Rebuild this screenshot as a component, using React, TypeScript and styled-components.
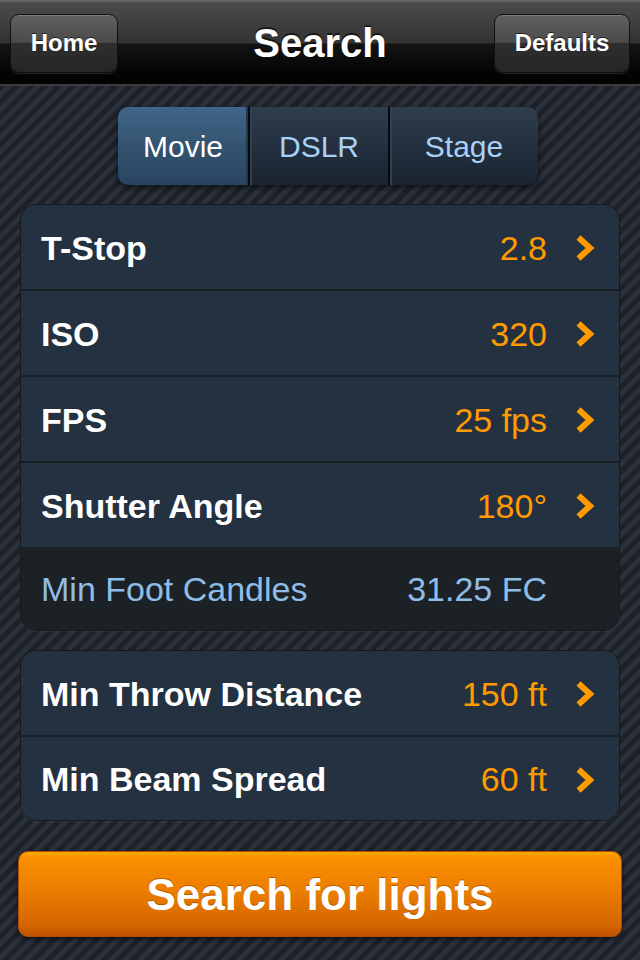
import React from "react";
import styled, { createGlobalStyle } from "styled-components";

const GlobalStyle = createGlobalStyle`
  html, body {
    margin: 0;
    padding: 0;
  }
  body {
    width: 640px;
    height: 960px;
    overflow: hidden;
    font-family: "Liberation Sans", Arial, Helvetica, sans-serif;
    background-color: #20262e;
    background-image: repeating-linear-gradient(
      135deg,
      #1d2229 0px,
      #1d2229 5px,
      #2a313b 5px,
      #2a313b 10px
    );
  }
`;

const Screen = styled.div`
  width: 640px;
  height: 960px;
  display: flex;
  flex-direction: column;
`;

const NavBar = styled.header`
  height: 86px;
  display: grid;
  grid-template-columns: 1fr auto 1fr;
  align-items: center;
  padding: 0 10px;
  box-sizing: border-box;
  background: linear-gradient(
    to bottom,
    #6e6e6e 0px,
    #4a4a4a 3px,
    #333333 43px,
    #141414 44px,
    #050505 70px,
    #000000 86px
  );
  border-bottom: 2px solid #3c3c3c;
`;

const NavButton = styled.button<{ $side: "left" | "right" }>`
  justify-self: ${(p) => (p.$side === "left" ? "start" : "end")};
  width: ${(p) => (p.$side === "left" ? "108px" : "136px")};
  height: 59px;
  margin-top: 2px;
  border-radius: 9px;
  border: 1px solid #101010;
  background: linear-gradient(
    to bottom,
    #606060 0%,
    #4a4a4a 48%,
    #2e2e2e 50%,
    #262626 100%
  );
  box-shadow: inset 0 1px 0 rgba(255, 255, 255, 0.18), 0 1px 0 rgba(255, 255, 255, 0.12);
  color: #ffffff;
  font-family: "Liberation Sans", Arial, sans-serif;
  font-weight: bold;
  font-size: 24px;
  text-shadow: 0 -1px 0 rgba(0, 0, 0, 0.6);
  padding: 0;
`;

const Title = styled.h1`
  margin: 2px 0 0 0;
  color: #ffffff;
  font-size: 40px;
  font-weight: bold;
  text-shadow: 0 -2px 0 rgba(0, 0, 0, 0.6);
`;

const Content = styled.main`
  display: flex;
  flex-direction: column;
  padding: 0 20px;
`;

const Segmented = styled.div`
  align-self: flex-start;
  margin: 21px 0 0 98px;
  display: grid;
  grid-template-columns: 130px 138px 148px;
  column-gap: 2px;
  height: 78px;
  border-radius: 10px;
  overflow: hidden;
  background: #06090c;
  box-shadow: 0 3px 6px rgba(0, 0, 0, 0.55);
`;

const Segment = styled.div<{ $active?: boolean }>`
  display: flex;
  align-items: center;
  justify-content: center;
  padding-top: 2px;
  font-size: 30px;
  color: ${(p) => (p.$active ? "#ffffff" : "#a9d1f7")};
  background: ${(p) =>
    p.$active
      ? "linear-gradient(to bottom, #41658a 0%, #33536f 50%, #294460 100%)"
      : "linear-gradient(to bottom, #2f3d4c 0%, #243040 50%, #1a2430 100%)"};
  box-shadow: ${(p) =>
    p.$active ? "inset -2px 0 0 #1e3852" : "inset 2px 0 0 #33414f"};
`;

const Group = styled.section<{ $top: number }>`
  margin-top: ${(p) => p.$top}px;
  border: 1px solid #15191d;
  border-radius: 16px;
  overflow: hidden;
  background: #243140;
  box-shadow: 0 1px 0 rgba(255, 255, 255, 0.04);
`;

const Row = styled.div<{ $divider?: boolean; $muted?: boolean; $h?: number }>`
  height: ${(p) => p.$h ?? 84}px;
  display: flex;
  align-items: center;
  padding: 2px 24px 0 20px;
  box-sizing: border-box;
  border-top: ${(p) => (p.$divider ? "2px solid #1a1f25" : "none")};
  background: ${(p) => (p.$muted ? "#1c2126" : "#243140")};
`;

const Label = styled.span<{ $muted?: boolean }>`
  flex: 1;
  font-size: 34px;
  font-weight: ${(p) => (p.$muted ? "normal" : "bold")};
  color: ${(p) => (p.$muted ? "#8fbde8" : "#ffffff")};
`;

const Value = styled.span<{ $muted?: boolean }>`
  font-size: 34px;
  color: ${(p) => (p.$muted ? "#8fbde8" : "#ff9a00")};
`;

const ChevronSlot = styled.span`
  width: 48px;
  height: 28px;
  display: flex;
  justify-content: flex-end;
  align-items: center;
`;

const SearchButton = styled.button`
  margin: 30px -2px 0 -2px;
  height: 86px;
  border-radius: 10px;
  border: 1px solid #b24e00;
  background: linear-gradient(
    to bottom,
    #ffa800 0%,
    #fb8e00 8%,
    #ec7e00 45%,
    #d66700 85%,
    #c05400 100%
  );
  box-shadow: 0 2px 5px rgba(0, 0, 0, 0.6);
  color: #ffffff;
  font-family: "Liberation Sans", Arial, sans-serif;
  font-weight: bold;
  font-size: 44px;
  text-shadow: 0 -1px 0 rgba(120, 50, 0, 0.5);
  padding: 2px 0 0 0;
`;

const Chevron = () => (
  <svg width="20" height="28" viewBox="0 0 20 28">
    <polyline
      points="3.5,3.5 15,14 3.5,24.5"
      fill="none"
      stroke="#ff9a00"
      strokeWidth="6"
      strokeLinecap="butt"
      strokeLinejoin="miter"
    />
  </svg>
);

type Item = { label: string; value: string };

const cameraItems: Item[] = [
  { label: "T-Stop", value: "2.8" },
  { label: "ISO", value: "320" },
  { label: "FPS", value: "25 fps" },
  { label: "Shutter Angle", value: "180°" },
];

const lightItems: Item[] = [
  { label: "Min Throw Distance", value: "150 ft" },
  { label: "Min Beam Spread", value: "60 ft" },
];

export default function App() {
  return (
    <>
      <GlobalStyle />
      <Screen>
        <NavBar>
          <NavButton $side="left">Home</NavButton>
          <Title>Search</Title>
          <NavButton $side="right">Defaults</NavButton>
        </NavBar>
        <Content>
          <Segmented>
            <Segment $active>Movie</Segment>
            <Segment>DSLR</Segment>
            <Segment>Stage</Segment>
          </Segmented>

          <Group $top={19}>
            {cameraItems.map((it, i) => (
              <Row key={it.label} $divider={i > 0} $h={i > 0 ? 86 : 84}>
                <Label>{it.label}</Label>
                <Value>{it.value}</Value>
                <ChevronSlot>
                  <Chevron />
                </ChevronSlot>
              </Row>
            ))}
            <Row $muted $h={83}>
              <Label $muted>Min Foot Candles</Label>
              <Value $muted>31.25 FC</Value>
              <ChevronSlot />
            </Row>
          </Group>

          <Group $top={19}>
            {lightItems.map((it, i) => (
              <Row key={it.label} $divider={i > 0} $h={i > 0 ? 85 : 84}>
                <Label>{it.label}</Label>
                <Value>{it.value}</Value>
                <ChevronSlot>
                  <Chevron />
                </ChevronSlot>
              </Row>
            ))}
          </Group>

          <SearchButton>Search for lights</SearchButton>
        </Content>
      </Screen>
    </>
  );
}
